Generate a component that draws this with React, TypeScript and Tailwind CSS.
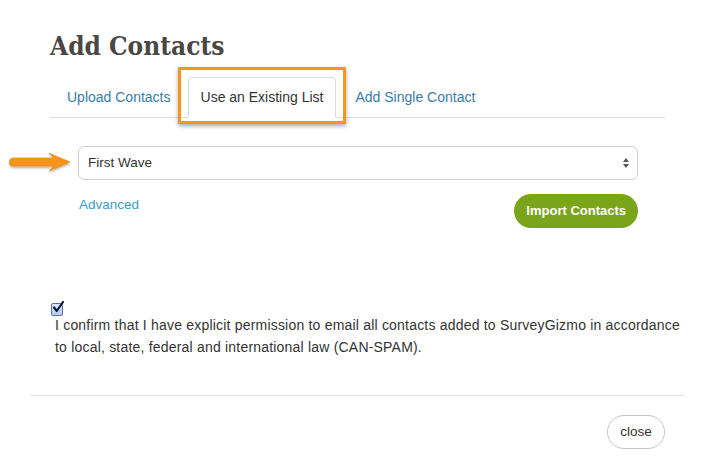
import React from "react";

export default function App() {
  return (
    <div className="w-[714px] h-[468px] bg-white relative overflow-hidden" style={{ fontFamily: '"Liberation Sans", Arial, sans-serif' }}>
      <div className="pt-[28px] px-[50px]">
        <h1 className="text-[26px] leading-[36px] font-bold text-[#4a4744]" style={{ fontFamily: '"DejaVu Serif Condensed", "DejaVu Serif", serif', fontStretch: "condensed" }}>
          Add Contacts
        </h1>
      </div>

      <div className="mx-[50px] mt-[13px] w-[615px] border-b border-[#dcdcdc] flex items-end h-[41px]">
        <div className="pl-[17px] pr-[17px] h-[40px] flex items-center text-[14px] text-[#3a7ca8]">Upload Contacts</div>
        <div className="relative">
          <div className="px-[12px] h-[41px] -mb-px flex items-center text-[14px] text-[#333] bg-white border border-[#dcdcdc] border-b-white rounded-t-[4px]">
            Use an Existing List
          </div>
          <div className="absolute -left-[10px] -right-[10px] -top-[10px] -bottom-[7px] border-[3px] border-[#f7941d] shadow-[0_2px_4px_rgba(0,0,0,0.35)] pointer-events-none" />
        </div>
        <div className="px-[19px] h-[40px] flex items-center text-[14px] text-[#3a7ca8]">Add Single Contact</div>
      </div>

      <div className="relative mt-[28px] ml-[78px] w-[560px]">
        <svg className="absolute -left-[70px] top-[4px]" width="68" height="28" viewBox="0 0 68 28">
          <defs>
            <filter id="sh" x="-20%" y="-40%" width="140%" height="180%">
              <feDropShadow dx="0" dy="1.5" stdDeviation="1.3" floodColor="#000" floodOpacity="0.35" />
            </filter>
          </defs>
          <path d="M5 8 H46 L41 3 L62 12 L41 21 L46 16 H5 Q1.5 16 1.5 12 Q1.5 8 5 8 Z" fill="#f7941d" stroke="#e8860f" strokeWidth="0.6" strokeLinejoin="round" filter="url(#sh)" />
        </svg>
        <div className="h-[34px] rounded-[6px] border border-[#cfcfcf] flex items-center justify-between pl-[9px] pr-[7px] text-[13.5px] text-[#333]">
          <span>First Wave</span>
          <svg width="8" height="12" viewBox="0 0 8 12">
            <path d="M4 1 L7 5 H1 Z" fill="#555" />
            <path d="M4 11 L7 7 H1 Z" fill="#555" />
          </svg>
        </div>
      </div>

      <div className="ml-[79px] w-[559px] flex justify-between items-start mt-[14px]">
        <a className="text-[13.5px] text-[#3d9bc8] mt-[1px]">Advanced</a>
        <button className="h-[34px] px-[12px] rounded-full bg-[#7aa51b] text-white text-[13px] font-bold">Import Contacts</button>
      </div>

      <div className="mt-[75px] ml-[51px]">
        <div className="w-[12px] h-[13px] border border-[#5b6fa8] rounded-[2px] bg-gradient-to-b from-[#dfe8fb] to-[#b7c8ef] relative">
          <svg className="absolute -top-[3px] left-[0px]" width="13" height="13" viewBox="0 0 13 13">
            <path d="M2 6.5 L4.8 10 L11 1" stroke="#0d1a40" strokeWidth="2.2" fill="none" strokeLinecap="round" strokeLinejoin="round" />
          </svg>
        </div>
        <p className="ml-[4px] -mt-[2px] text-[14px] leading-[22px] text-[#333] w-[650px] tracking-[0.2px]">
          I confirm that I have explicit permission to email all contacts added to SurveyGizmo in accordance
          <br />
          to local, state, federal and international law (CAN-SPAM).
        </p>
      </div>

      <div className="mx-[30px] mt-[37px] border-t border-[#e2e2e2]" />

      <div className="flex justify-end pr-[49px] mt-[19px]">
        <button className="h-[34px] w-[58px] rounded-full border border-[#c8c8c8] text-[13.5px] text-[#333] bg-white">close</button>
      </div>
    </div>
  );
}
